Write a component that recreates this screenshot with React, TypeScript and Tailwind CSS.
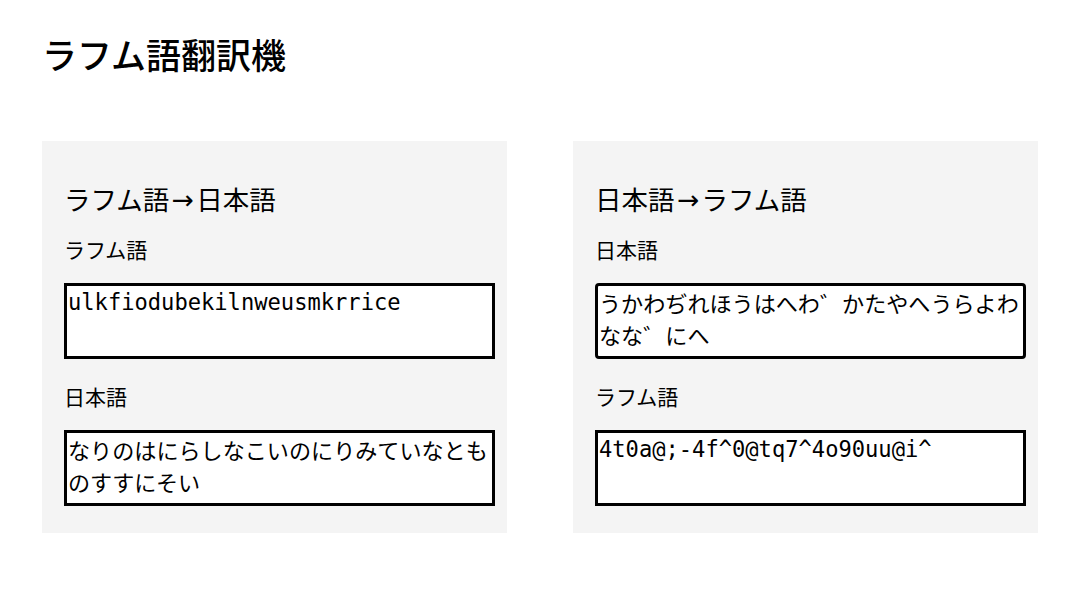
const jp = { fontFamily: '"Noto Sans CJK JP", "Noto Sans", sans-serif' };
const mono = { fontFamily: '"DejaVu Sans Mono", "Noto Sans CJK JP", monospace' };
const arrow = { fontFamily: '"DejaVu Sans", sans-serif' };

function Box({ text, monoText, focused }: { text: string; monoText?: boolean; focused?: boolean }) {
  return (
    <div
      className={`w-[431px] h-[76px] bg-white border-[3px] border-black pl-[1px] text-[22.1px] leading-[32px] text-black ${
        focused ? "rounded-[4px]" : ""
      }`}
      style={monoText ? mono : jp}
    >
      {text}
    </div>
  );
}

function Panel({
  from,
  to,
  fromText,
  fromMono,
  toText,
  toMono,
  focused,
}: {
  from: string;
  to: string;
  fromText: string;
  fromMono?: boolean;
  toText: string;
  toMono?: boolean;
  focused?: boolean;
}) {
  return (
    <section className="w-[465px] bg-[#f4f4f4] pt-[39px] pb-[27px] pl-[22px]">
      <h2 className="h-[38px] text-[26.5px] leading-[38px] text-black">
        {from}
        <span className="inline-block w-[27px] text-center leading-[20px] align-[1px]" style={arrow}>
          →
        </span>
        {to}
      </h2>
      <div className="mt-[16px] text-[21px] leading-[30px] text-black">{from}</div>
      <div className="mt-[19px]">
        <Box text={fromText} monoText={fromMono} focused={focused} />
      </div>
      <div className="mt-[22px] text-[21px] leading-[30px] text-black">{to}</div>
      <div className="mt-[19px]">
        <Box text={toText} monoText={toMono} />
      </div>
    </section>
  );
}

export default function App() {
  return (
    <main className="w-[1080px] h-[596px] bg-white px-[42px] pt-[28px]" style={jp}>
      <h1 className="text-[35px] leading-[51px] font-medium text-black">ラフム語翻訳機</h1>

      <div className="mt-[62px] flex gap-[66px]">
        <Panel
          from="ラフム語"
          to="日本語"
          fromText="ulkfiodubekilnweusmkrrice"
          fromMono
          toText="なりのはにらしなこいのにりみていなとものすすにそい"
        />
        <Panel
          from="日本語"
          to="ラフム語"
          fromText="うかわぢれほうはへわ゛かたやへうらよわなな゛にへ"
          toText="4t0a@;-4f^0@tq7^4o90uu@i^"
          toMono
          focused
        />
      </div>
    </main>
  );
}
